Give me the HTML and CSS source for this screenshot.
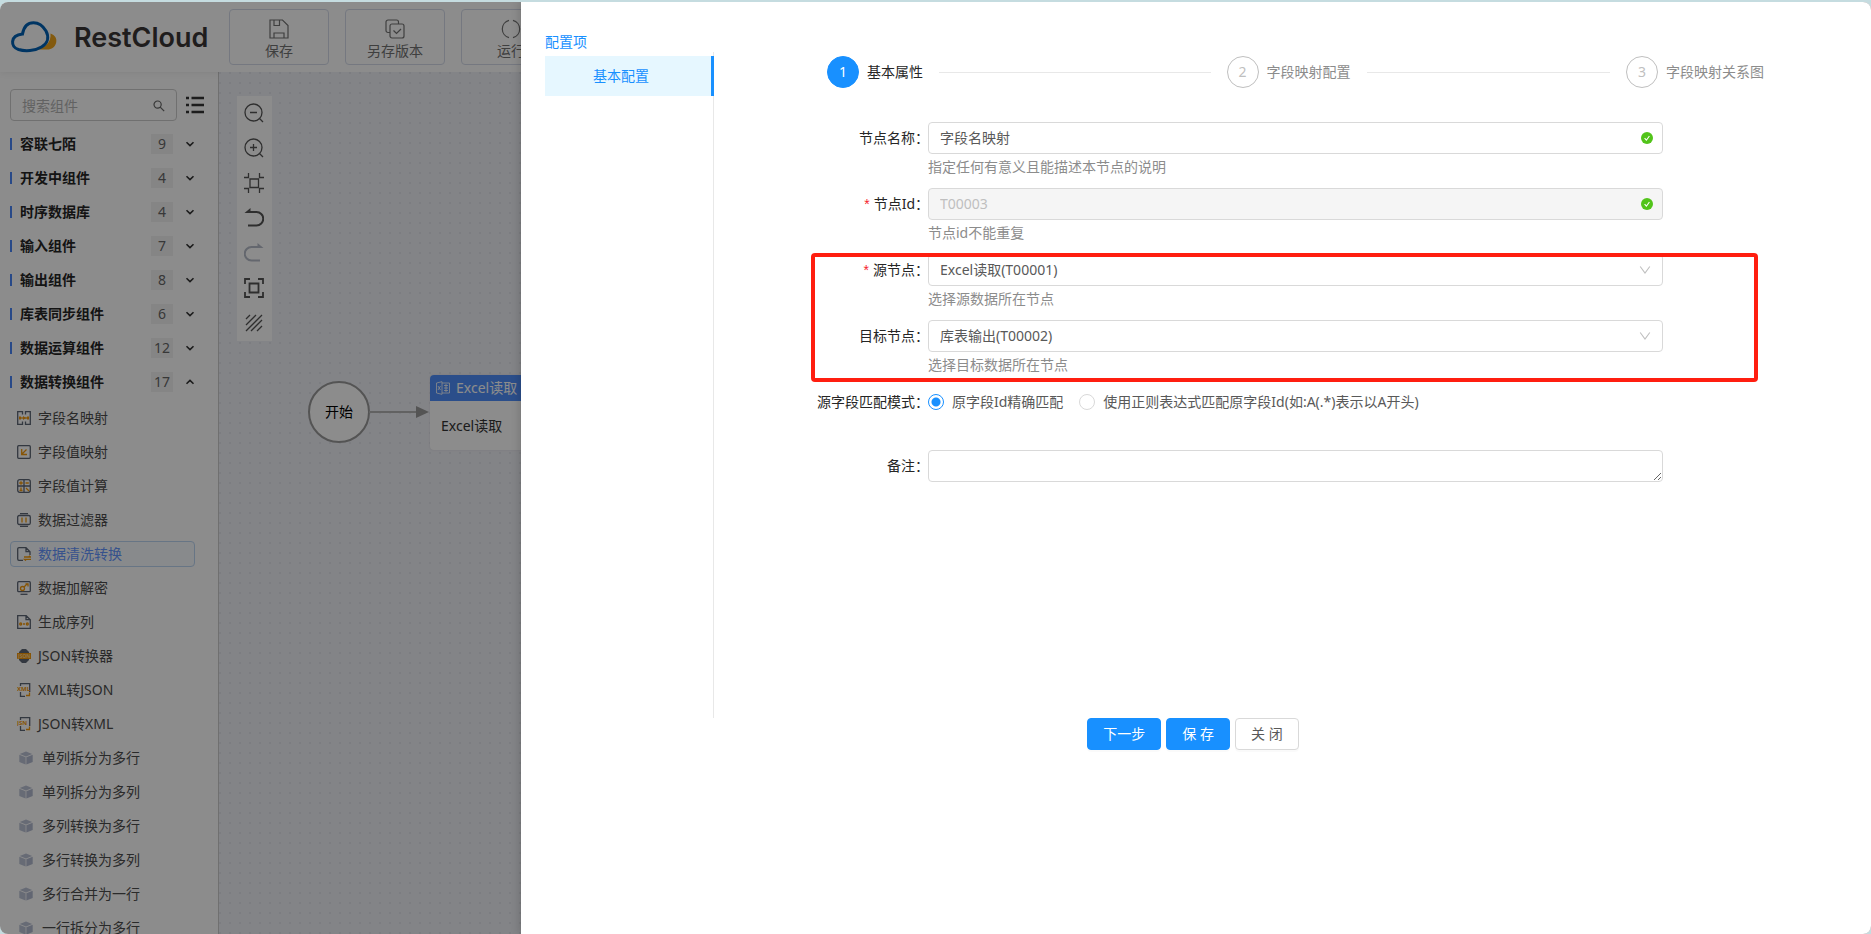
FILE: index.html
```html
<!DOCTYPE html>
<html lang="zh-CN">
<head>
<meta charset="utf-8">
<title>RestCloud</title>
<link rel="stylesheet" href="styles.css">
</head>
<body>
<svg class="defs" aria-hidden="true">
  <symbol id="down" viewBox="0 0 10 10"><path d="M1.500 3.200 5 6.600 8.500 3.200" fill="none" stroke="currentColor" stroke-width="1.600"/></symbol>
  <symbol id="cube" viewBox="0 0 14 14"><path d="M7 .6 13.200 3 7 5.600.8 3Z" fill="#bcc3d6"/><path d="M.3 3.700 6.600 6.300V13.600L.3 11Z" fill="#bcc3d6"/><path d="M13.700 3.700 7.400 6.300V13.600L13.700 11Z" fill="#b2bad0"/></symbol>
  <symbol id="tick" viewBox="0 0 12 12"><circle cx="6" cy="6" r="6" fill="#52c41a"/><path d="m3.600 6.200 1.800 2 3-4.200" fill="none" stroke="#fff" stroke-width="1.100"/></symbol>
  <symbol id="arrow" viewBox="0 0 12 12"><path d="M1.200 2.500 6 9 10.800 2.500" fill="none" stroke="#bfbfbf" stroke-width="1.100"/></symbol>
</svg>
<div class="app">
  <header class="topbar">
    <div class="brand">
      <svg class="brand-mark" viewBox="0 0 48 34"><path d="M40.500 13.500c4.500 1.500 6.500 5 5.700 9-.9 4.500-4.700 7-8.900 7H26c9-1 15.500-7.500 14.500-16Z" fill="#efa51c"/><path d="M12.500 14C14 6 18 2.800 23.500 2.800c5 0 9.500 3.200 12.500 8.200 3.500 6.500 1.500 12.500-4.500 16C25 31 15 31.500 8.500 29.500 4 28 2.300 25 2.600 21.500 3 17 7 14.500 12.500 14Z" fill="#fff" stroke="#0061b5" stroke-width="3"/></svg>
      <span class="brand-name">RestCloud</span>
    </div>
    <div class="actions">
      <button class="action"><svg viewBox="0 0 20 20"><path d="M1 1h12.500L19 6.500V19H1ZM5 1v5.500h5.500V1M5 19v-5h10v5" /></svg>保存</button>
      <button class="action"><svg viewBox="0 0 20 20"><path d="M5 13.500H3a2 2 0 0 1-2-2V3a2 2 0 0 1 2-2h8.500a2 2 0 0 1 2 2v2M7 5h10a2 2 0 0 1 2 2v10a2 2 0 0 1-2 2H7a2 2 0 0 1-2-2V7a2 2 0 0 1 2-2ZM8.500 11.500l3 3 4.500-4.500"/></svg>另存版本</button>
      <button class="action"><svg viewBox="0 0 20 20"><path d="M8 1.300A9 9 0 0 0 8 18.700M12 1.300A9 9 0 0 1 12 18.700"/></svg>运行</button>
    </div>
  </header>
  <div class="workspace">
    <aside class="sidebar">
      <div class="search-row">
        <label class="search"><input type="text" placeholder="搜索组件" aria-label="搜索组件"><svg viewBox="0 0 12 12"><circle cx="4.600" cy="4.600" r="3.600"/><path d="m7.200 7.200 4 4"/></svg></label>
        <button class="list-toggle" aria-label="列表"><svg viewBox="0 0 18 18"><path d="M0 2h3M0 9h3M0 16h3M5.500 2H18M5.500 9H18M5.500 16H18" stroke="#333" stroke-width="2.600"/></svg></button>
      </div>
      <button class="group"><span class="group-name">容联七陌</span><span class="count">9</span><svg class="caret"><use href="#down"/></svg></button>
      <button class="group"><span class="group-name">开发中组件</span><span class="count">4</span><svg class="caret"><use href="#down"/></svg></button>
      <button class="group"><span class="group-name">时序数据库</span><span class="count">4</span><svg class="caret"><use href="#down"/></svg></button>
      <button class="group"><span class="group-name">输入组件</span><span class="count">7</span><svg class="caret"><use href="#down"/></svg></button>
      <button class="group"><span class="group-name">输出组件</span><span class="count">8</span><svg class="caret"><use href="#down"/></svg></button>
      <button class="group"><span class="group-name">库表同步组件</span><span class="count">6</span><svg class="caret"><use href="#down"/></svg></button>
      <button class="group"><span class="group-name">数据运算组件</span><span class="count">12</span><svg class="caret"><use href="#down"/></svg></button>
      <button class="group"><span class="group-name">数据转换组件</span><span class="count">17</span><svg class="caret open"><use href="#down"/></svg></button>
      <div class="items">
        <a class="item" href="#"><svg viewBox="0 0 14 14"><path class="g" d="M5.500 3.500V.7H.7v12.600h4.800v-2.800M8.500 3.500V.7h4.800v12.600H8.500v-2.800"/><path class="o" d="M2 7h10"/><path class="of" d="M2 5.500h2v3H2zM10 5.500h2v3h-2zM6 5l3 2-3 2z"/></svg>字段名映射</a>
        <a class="item" href="#"><svg viewBox="0 0 14 14"><rect class="g" x=".7" y=".7" width="12.600" height="12.600" rx="1"/><path class="o" d="M4.700 4v5.500H10M5 9l4.500-4.500"/></svg>字段值映射</a>
        <a class="item" href="#"><svg viewBox="0 0 14 14"><rect class="g" x=".7" y=".7" width="12.600" height="12.600" rx="2"/><path class="g" d="M7 1v12M1 7h12"/><path class="o" d="M2.200 4h3.600M4 2.200v3.600M8.500 4h3.300M4 8.500v3.500M2.500 11.500h3M9 9l3 3"/></svg>字段值计算</a>
        <a class="item" href="#"><svg viewBox="0 0 14 14"><rect class="g" x=".7" y="2.500" width="12.600" height="9" rx="1.500"/><path class="g" d="M3 .7h8M3 13.300h8"/><path class="o" d="M5 4.500v5M9 4.500v5"/></svg>数据过滤器</a>
        <a class="item selected" href="#"><svg viewBox="0 0 14 14"><path class="g" d="M6 13.300H2a1.300 1.300 0 0 1-1.300-1.300V2A1.300 1.300 0 0 1 2 .7h7L13 4.700V8M9 .7v4h4"/><path class="o" d="M7 10h6.500L12 8.700M14 12.300H7.500L9 13.600"/></svg>数据清洗转换</a>
        <a class="item" href="#"><svg viewBox="0 0 14 14"><rect class="g" x=".7" y=".7" width="12.600" height="10" rx="1"/><path class="g" d="M3.500 13.300h7"/><circle class="o" cx="5.500" cy="7.500" r="2"/><path class="o" d="m7 6 3.500-3.500M8.500 3H11v2.500"/></svg>数据加解密</a>
        <a class="item" href="#"><svg viewBox="0 0 14 14"><path class="g" d="M.7.700h8.500l4.100 4v8.600H.7ZM9 .7v4h4.300"/><circle class="o" cx="3.700" cy="9" r="1"/><circle class="o" cx="10.300" cy="9" r="1"/><path class="o" d="M6 9h2"/></svg>生成序列</a>
        <a class="item" href="#"><svg viewBox="0 0 14 14"><path d="M5 0h4l3 3v8l-3 3H5l-3-3V3Z" fill="#5d6675"/><path class="of" d="M0 4h14v6H0z"/><text class="tiny light" x="1" y="9">JSON</text></svg>JSON转换器</a>
        <a class="item" href="#"><svg viewBox="0 0 14 14"><path class="g" d="M3.500 3V.7h9.200V9M3.500 9v4.300H8"/><text class="tiny" x="0" y="8">XML</text><path class="o" d="M9 12.500h3.500V9.500"/></svg>XML转JSON</a>
        <a class="item" href="#"><svg viewBox="0 0 14 14"><path class="g" d="M3.500 3V.7h9.200V9M3.500 9v4.300H8"/><text class="tiny" x="0" y="8">JSN</text><path class="o" d="M9 12.500h3.500V9.500"/></svg>JSON转XML</a>
        <a class="item custom" href="#"><svg><use href="#cube"/></svg>单列拆分为多行</a>
        <a class="item custom" href="#"><svg><use href="#cube"/></svg>单列拆分为多列</a>
        <a class="item custom" href="#"><svg><use href="#cube"/></svg>多列转换为多行</a>
        <a class="item custom" href="#"><svg><use href="#cube"/></svg>多行转换为多列</a>
        <a class="item custom" href="#"><svg><use href="#cube"/></svg>多行合并为一行</a>
        <a class="item custom" href="#"><svg><use href="#cube"/></svg>一行拆分为多行</a>
      </div>
    </aside>
    <main class="canvas">
      <div class="tools">
        <button aria-label="缩小"><svg viewBox="0 0 20 20"><circle cx="9.500" cy="9.500" r="8.500"/><path d="M6 9.500h7M15.500 15.500l3.500 3.500"/></svg></button>
        <button aria-label="放大"><svg viewBox="0 0 20 20"><circle cx="9.500" cy="9.500" r="8.500"/><path d="M6 9.500h7M9.500 6v7M15.500 15.500l3.500 3.500"/></svg></button>
        <button aria-label="适应画布"><svg viewBox="0 0 20 20"><path d="M6 6h8.500v8.500H6ZM0 4.500h4.500V0M20 4.500h-4.500V0M0 15.500h4.500V20M20 15.500h-4.500V20"/></svg></button>
        <button aria-label="撤销"><svg viewBox="0 0 20 20"><path d="M4 4h8.500a6.700 6.700 0 0 1 0 13.500H4" stroke-width="2"/><path d="M.5 5 6.500 0v5Z" fill="currentColor" stroke="none"/></svg></button>
        <button class="off" aria-label="重做" disabled><svg viewBox="0 0 20 20"><path d="M16 4H7.500a6.700 6.700 0 0 0 0 13.500H16" stroke-width="2"/><path d="M19.500 5 13.500 0v5Z" fill="currentColor" stroke="none"/></svg></button>
        <button aria-label="全屏"><svg viewBox="0 0 20 20"><path d="M5.500 5.500h9v9h-9ZM1 6V1h5M14 1h5v5M19 14v5h-5M6 19H1v-5" stroke-width="1.800"/></svg></button>
        <button aria-label="网格"><svg viewBox="0 0 20 20"><path d="M2 6l4-4M2 12 12 2M2 18 18 2M7 18 18 7M13 18l5-5"/></svg></button>
      </div>
      <div class="start-node">开始</div>
      <svg class="edge" viewBox="0 0 60 14"><path d="M0 7h50" stroke="#b3b3b3" stroke-width="2"/><path d="M47 1v12l13-6Z" fill="#999"/></svg>
      <div class="node">
        <div class="node-head"><svg viewBox="0 0 14 14"><path d="M.5 2 6 .7v12.600L.5 12ZM6 2h7.500v10H6M8 4.500h4M8 7h4M8 9.500h4M10 3v8M2 5l2.500 4M4.500 5 2 9" fill="none" stroke="#fff" stroke-width=".8"/></svg>Excel读取</div>
        <div class="node-body">Excel读取</div>
      </div>
    </main>
  </div>
  <div class="mask"></div>
  <section class="drawer">
    <nav class="menu">
      <h2 class="menu-title">配置项</h2>
      <div class="menu-list"><a class="menu-item" href="#">基本配置</a></div>
    </nav>
    <div class="config">
      <ol class="steps">
        <li class="step current"><span class="step-num">1</span><span class="step-title">基本属性</span></li>
        <li class="step"><span class="step-num">2</span><span class="step-title">字段映射配置</span></li>
        <li class="step"><span class="step-num">3</span><span class="step-title">字段映射关系图</span></li>
      </ol>
      <form class="form">
        <div class="row">
          <label for="name">节点名称：</label>
          <div class="control"><input id="name" type="text" value="字段名映射"><svg class="status"><use href="#tick"/></svg></div>
          <p class="hint">指定任何有意义且能描述本节点的说明</p>
        </div>
        <div class="row">
          <label class="required" for="nid">节点Id：</label>
          <div class="control"><input id="nid" type="text" value="T00003" disabled><svg class="status"><use href="#tick"/></svg></div>
          <p class="hint">节点id不能重复</p>
        </div>
        <div class="marked">
          <div class="row">
            <label class="required" for="src">源节点：</label>
            <div class="control"><select id="src"><option>Excel读取(T00001)</option></select><svg class="status select-arrow"><use href="#arrow"/></svg></div>
            <p class="hint">选择源数据所在节点</p>
          </div>
          <div class="row">
            <label for="dst">目标节点：</label>
            <div class="control"><select id="dst"><option>库表输出(T00002)</option></select><svg class="status select-arrow"><use href="#arrow"/></svg></div>
            <p class="hint">选择目标数据所在节点</p>
          </div>
          <div class="highlight"></div>
        </div>
        <div class="row radio-row" role="radiogroup" aria-labelledby="mode">
          <span class="label" id="mode">源字段匹配模式：</span>
          <div class="radios">
            <label class="radio"><input type="radio" name="mode" checked>原字段Id精确匹配</label>
            <label class="radio"><input type="radio" name="mode">使用正则表达式匹配原字段Id(如:A(.*)表示以A开头)</label>
          </div>
        </div>
        <div class="row">
          <label for="memo">备注：</label>
          <div class="control"><textarea id="memo" rows="1"></textarea></div>
        </div>
      </form>
    </div>
    <footer class="footer">
      <button class="btn primary">下一步</button>
      <button class="btn primary">保 存</button>
      <button class="btn">关 闭</button>
    </footer>
  </section>
</div>
</body>
</html>
```
FILE: styles.css
```css
* { box-sizing: border-box; }

body {
  margin: 0;
  height: 100vh;
  padding-top: 2px;
  overflow: hidden;
  background: #c5dce0;
  color: #262626;
  font: 14px/22px "Noto Sans", "Noto Sans CJK SC", sans-serif;
}

button, input, select, textarea { font: inherit; color: inherit; }
button { border: 0; background: none; padding: 0; cursor: pointer; }
a { color: inherit; text-decoration: none; }
svg { display: block; flex: none; }
.defs { position: absolute; width: 0; height: 0; }

.app {
  position: relative;
  display: flex;
  flex-direction: column;
  height: 100%;
  overflow: hidden;
  border-radius: 8px;
  background: #fff;
}

/* Top bar */
.topbar {
  position: relative;
  display: flex;
  align-items: center;
  flex: none;
  height: 70px;
  background: #fff;
  box-shadow: 0 2px 6px rgba(0, 0, 0, .06);
}
.brand { display: flex; align-items: center; gap: 16px; width: 229px; padding-left: 10px; }
.brand-mark { width: 48px; height: 34px; }
.brand-name { padding-top: 2px; font: 600 27px/34px Inter, sans-serif; color: #3a3636; }
.actions { display: flex; gap: 16px; }
.action {
  display: flex;
  flex-direction: column;
  align-items: center;
  gap: 1px;
  width: 100px;
  height: 56px;
  padding-top: 9px;
  border: 1px solid #d5dbea;
  border-radius: 4px;
  color: #737373;
}
.action svg { width: 20px; height: 20px; fill: none; stroke: #737373; stroke-width: 1.2; }

.workspace { display: flex; flex: 1; min-height: 0; }

/* Component list */
.sidebar {
  flex: none;
  width: 219px;
  padding: 17px 14px 0 10px;
  overflow: hidden;
  border-right: 1px solid #ccc;
}
.search-row { display: flex; align-items: center; gap: 9px; margin-bottom: 6px; }
.search {
  display: flex;
  align-items: center;
  width: 167px;
  height: 32px;
  padding: 1px 11px 0;
  border: 1px solid #ccc;
  border-radius: 4px;
}
.search input { flex: 1; min-width: 0; padding: 0; border: 0; outline: 0; background: none; }
.search input::placeholder { color: #b3b3b3; }
.search svg { width: 12px; height: 12px; fill: none; stroke: #666; stroke-width: 1.2; }
.list-toggle svg { width: 18px; height: 18px; }

.group { display: flex; align-items: center; width: 100%; height: 34px; text-align: left; }
.group::before { content: ""; width: 2px; height: 12px; margin-right: 8px; background: #4a86f7; }
.group-name { flex: 1; font-weight: 700; }
.count { width: 22px; height: 20px; line-height: 20px; text-align: center; background: #f3f3f3; color: #666; }
.caret { width: 10px; height: 10px; margin: 0 9px 0 12px; color: #333; }
.caret.open { transform: rotate(180deg); }

.items { display: flex; flex-direction: column; gap: 8px; padding: 6px 9px 0 0; }
.item {
  display: flex;
  align-items: center;
  gap: 7px;
  flex: none;
  height: 26px;
  padding-left: 6px;
  border: 1px solid transparent;
  border-radius: 4px;
  color: #4d4d4d;
}
.item svg { width: 14px; height: 14px; }
.item.custom { gap: 9px; padding-left: 8px; }
.item.selected { width: 185px; border-color: #bcd6f2; background: #f7fbff; color: #6496ff; }
.g { fill: none; stroke: #5d6675; stroke-width: 1.3; }
.o { fill: none; stroke: #f59a0c; stroke-width: 1.3; }
.of { fill: #f59a0c; }
.tiny { font: 700 6px "Noto Sans", sans-serif; fill: #f59a0c; }
.tiny.light { font-size: 5px; fill: #ffd58f; }

/* Flow canvas */
.canvas {
  position: relative;
  flex: 1;
  background: #eff0f6 radial-gradient(circle, #e2e4ec 1px, transparent 1px) 6px 6px / 10px 10px;
}
.tools { position: absolute; left: 18px; top: 24px; width: 35px; background: #fff; }
.tools button { display: grid; place-items: center; width: 35px; height: 35px; padding: 0 1px 2px 0; color: #555; }
.tools .off { color: #b6bcc9; }
.tools svg { width: 20px; height: 20px; fill: none; stroke: currentColor; stroke-width: 1.3; }
.start-node {
  position: absolute;
  left: 89px;
  top: 309px;
  width: 62px;
  height: 62px;
  border: 2px solid #999;
  border-radius: 50%;
  background: #fff;
  color: #000;
  line-height: 58px;
  text-align: center;
}
.edge { position: absolute; left: 150px; top: 333px; width: 60px; height: 14px; }
.node {
  position: absolute;
  left: 211px;
  top: 303px;
  width: 180px;
  overflow: hidden;
  border-radius: 4px;
  background: #fff;
  box-shadow: 0 0 2px rgba(0, 0, 0, .1);
}
.node-head { display: flex; align-items: center; gap: 6px; height: 26px; padding-left: 6px; background: #4f8ffb; color: #fff; }
.node-head svg { width: 14px; height: 14px; }
.node-body { padding: 14px 11px 13px; color: #333; }

/* Settings drawer */
.mask { position: absolute; inset: 0; background: rgba(0, 0, 0, .45); }
.drawer {
  position: absolute;
  inset: 0 0 0 521px;
  display: grid;
  grid-template-columns: 169px 1fr;
  grid-template-rows: auto 1fr;
  padding: 0 24px;
  background: #fff;
  box-shadow: -2px 0 8px rgba(0, 0, 0, .15);
}
.menu { display: flex; flex-direction: column; height: 716px; padding-top: 29px; }
.menu-title { margin: 0; font-size: 14px; font-weight: 400; line-height: 21px; color: #1890ff; }
.menu-list { flex: 1; padding-top: 4px; border-right: 1px solid #e8e8e8; }
.menu-item {
  display: block;
  height: 40px;
  margin-right: -1px;
  padding-left: 48px;
  border-right: 3px solid #1890ff;
  background: #e6f7ff;
  color: #1890ff;
  line-height: 40px;
}
.config { padding-top: 54px; }

.steps { display: flex; margin: 0 83px 34px 113px; padding: 0; list-style: none; }
.step { display: flex; align-items: center; gap: 8px; color: #8c8c8c; }
.step:not(:last-child) { flex: 1; margin-right: 16px; }
.step:not(:last-child)::after { content: ""; flex: 1; height: 1px; margin-left: 8px; background: #e8e8e8; }
.step-num {
  width: 32px;
  height: 32px;
  border: 1px solid #bfbfbf;
  border-radius: 50%;
  color: #bfbfbf;
  line-height: 30px;
  text-align: center;
}
.current { color: #262626; }
.current .step-num { border-color: #1890ff; background: #1890ff; color: #fff; }

.row {
  display: grid;
  grid-template-columns: 215px 1fr;
  grid-template-rows: 32px auto;
  padding-right: 184px;
}
.row > label, .label { line-height: 32px; text-align: right; }
.required::before { content: "*"; margin-right: 4px; color: #f5222d; font-family: "Liberation Sans", sans-serif; }
.control { position: relative; margin-left: -1px; color: #595959; }
.control input, .control select, .control textarea {
  display: block;
  width: 100%;
  height: 32px;
  padding: 4px 11px;
  border: 1px solid #d9d9d9;
  border-radius: 4px;
  outline: 0;
  background: #fff;
  appearance: none;
}
.control input { padding: 3px 11px 5px; }
.control input:disabled { background: #f5f5f5; color: #bfbfbf; }
.control textarea { min-height: 32px; resize: vertical; }
.status { position: absolute; right: 10px; top: 10px; width: 12px; height: 12px; }
.select-arrow { right: 12px; pointer-events: none; }
.hint { grid-column: 2; margin: 0 0 0 -1px; padding: 2px 0 10px; color: #8c8c8c; }
.marked { position: relative; }
.highlight {
  position: absolute;
  inset: -1px 89px 4px 97px;
  border: 4px solid #ff1e10;
  border-radius: 4px;
  pointer-events: none;
}
.radio-row { margin-bottom: 32px; }
.radios { display: flex; align-items: center; gap: 16px; margin-left: -1px; color: #595959; }
.radio { display: flex; align-items: center; gap: 8px; }
.radio input {
  flex: none;
  width: 16px;
  height: 16px;
  margin: 0;
  border: 1px solid #d9d9d9;
  border-radius: 50%;
  appearance: none;
}
.radio input:checked { border-color: #1890ff; background: radial-gradient(circle, #1890ff 4px, #fff 5px); }

.footer { grid-column: 1 / -1; display: flex; align-items: flex-start; justify-content: center; gap: 5px; padding-right: 6px; }
.btn {
  height: 32px;
  padding: 0 15px;
  border: 1px solid #d9d9d9;
  border-radius: 4px;
  background: #fff;
  color: #595959;
  box-shadow: 0 2px 0 rgba(0, 0, 0, .02);
}
.primary { border-color: #1890ff; background: #1890ff; color: #fff; }
```
